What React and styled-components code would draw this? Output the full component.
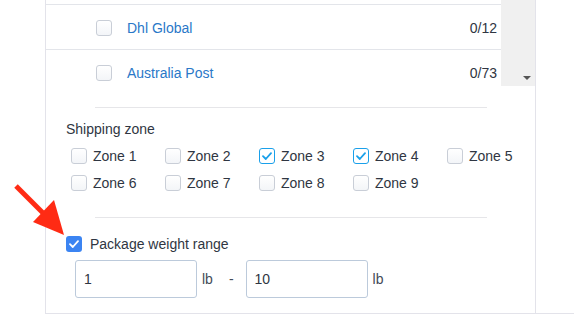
import React from "react";
import styled, { createGlobalStyle } from "styled-components";

const GlobalStyle = createGlobalStyle`
  html, body {
    margin: 0;
    padding: 0;
    background: #ffffff;
  }
  body {
    font-family: "Liberation Sans", Arial, sans-serif;
    color: #2f3642;
  }
`;

const Page = styled.div`
  position: relative;
  width: 574px;
  height: 315px;
  overflow: hidden;
`;

const Frame = styled.div`
  margin-left: 45px;
  border-left: 1px solid #e3e3ea;
  border-bottom: 1px solid #e3e3ea;
  height: 313px;
`;

const Panel = styled.div`
  width: 489px;
  height: 313px;
  border-right: 1px solid #e3e3ea;
  display: flex;
  flex-direction: column;
`;

const ListArea = styled.div`
  display: flex;
  height: 86px;
  overflow: hidden;
`;

const List = styled.div`
  flex: 1;
  padding-top: 4px;
`;

const Row = styled.div`
  display: flex;
  align-items: center;
  height: 45px;
  border-top: 1px solid #e3e5ea;
  padding: 2px 4px 0 50px;
  box-sizing: border-box;
  font-size: 14px;
`;

const CarrierName = styled.span`
  flex: 1;
  margin-left: 15px;
  color: #2a78c8;
`;

const Count = styled.span`
  color: #2f3642;
`;

const ScrollTrack = styled.div`
  width: 34px;
  background: #f0f0f0;
  display: flex;
  align-items: flex-end;
  justify-content: flex-end;
  padding: 0 4px 6px 0;
  box-sizing: border-box;
`;

const ScrollArrow = styled.div`
  width: 0;
  height: 0;
  border-left: 4px solid transparent;
  border-right: 4px solid transparent;
  border-top: 4px solid #555;
`;

const Divider = styled.div`
  margin: ${(p) => p.$top}px 0 0 49px;
  width: 392px;
  height: 1px;
  background: #e6e6e9;
`;

const SectionLabel = styled.div`
  margin: 11px 0 0 20px;
  font-size: 14px;
  line-height: 20px;
  color: #2f3642;
`;

const ZoneGrid = styled.div`
  margin: 9px 0 0 25px;
  display: grid;
  grid-template-columns: repeat(5, 94px);
  row-gap: 11px;
`;

const Option = styled.label`
  display: flex;
  align-items: center;
  gap: 6px;
  height: 16px;
  font-size: 14px;
  color: #2f3642;
  white-space: nowrap;
`;

const Box = styled.span`
  width: 16px;
  height: 16px;
  box-sizing: border-box;
  border-radius: 3px;
  flex: none;
  display: flex;
  align-items: center;
  justify-content: center;
  border: 1px solid ${(p) => (p.$checked ? "#1aa0ea" : "#c9ced7")};
  background: ${(p) => (p.$checked ? "#ffffff" : "linear-gradient(#ffffff, #f3f5f8)")};
`;

const FilledBox = styled.span`
  width: 16px;
  height: 16px;
  border-radius: 3px;
  flex: none;
  display: flex;
  align-items: center;
  justify-content: center;
  background: #3b84f2;
`;

const WeightToggle = styled.label`
  margin: 18px 0 0 20px;
  display: flex;
  align-items: center;
  gap: 8px;
  font-size: 14px;
  color: #2f3642;
`;

const RangeRow = styled.div`
  margin: 8px 0 0 29px;
  display: flex;
  align-items: center;
  font-size: 14px;
`;

const NumberInput = styled.input`
  width: 122px;
  height: 38px;
  box-sizing: border-box;
  border: 1px solid #bccadb;
  border-radius: 3px;
  padding: 0 8px;
  font-family: "Liberation Sans", Arial, sans-serif;
  font-size: 14px;
  color: #2f3642;
  outline: none;
`;

const Unit = styled.span`
  margin-left: 5px;
  color: #444b57;
`;

const Dash = styled.span`
  margin: 0 12px 0 16px;
  color: #444b57;
`;

const Arrow = styled.svg`
  position: absolute;
  left: 0;
  top: 0;
  pointer-events: none;
`;

function Check({ color }) {
  return (
    <svg width="10" height="8" viewBox="0 0 10 8">
      <path d="M1 4.2 L3.8 7 L9 1.2" fill="none" stroke={color} strokeWidth="1.8" strokeLinecap="round" strokeLinejoin="round" />
    </svg>
  );
}

const carriers = [
  { name: "Dhl Global", count: "0/12" },
  { name: "Australia Post", count: "0/73" },
];

const zones = [
  { name: "Zone 1", on: false },
  { name: "Zone 2", on: false },
  { name: "Zone 3", on: true },
  { name: "Zone 4", on: true },
  { name: "Zone 5", on: false },
  { name: "Zone 6", on: false },
  { name: "Zone 7", on: false },
  { name: "Zone 8", on: false },
  { name: "Zone 9", on: false },
];

export default function App() {
  return (
    <Page>
      <GlobalStyle />
      <Frame>
        <Panel>
          <ListArea>
            <List>
              {carriers.map((c) => (
                <Row key={c.name}>
                  <Box />
                  <CarrierName>{c.name}</CarrierName>
                  <Count>{c.count}</Count>
                </Row>
              ))}
            </List>
            <ScrollTrack>
              <ScrollArrow />
            </ScrollTrack>
          </ListArea>

          <Divider $top={21} />
          <SectionLabel>Shipping zone</SectionLabel>
          <ZoneGrid>
            {zones.map((z) => (
              <Option key={z.name}>
                <Box $checked={z.on}>{z.on && <Check color="#1aa0ea" />}</Box>
                {z.name}
              </Option>
            ))}
          </ZoneGrid>

          <Divider $top={26} />
          <WeightToggle>
            <FilledBox>
              <Check color="#ffffff" />
            </FilledBox>
            Package weight range
          </WeightToggle>
          <RangeRow>
            <NumberInput defaultValue="1" />
            <Unit>lb</Unit>
            <Dash>-</Dash>
            <NumberInput defaultValue="10" />
            <Unit>lb</Unit>
          </RangeRow>
        </Panel>
      </Frame>

      <Arrow width="80" height="250" viewBox="0 0 80 250">
        <line x1="16" y1="186" x2="46" y2="216" stroke="#ff2b14" strokeWidth="5" />
        <polygon points="64,235 33,222 54,200" fill="#ff2b14" />
      </Arrow>
    </Page>
  );
}
